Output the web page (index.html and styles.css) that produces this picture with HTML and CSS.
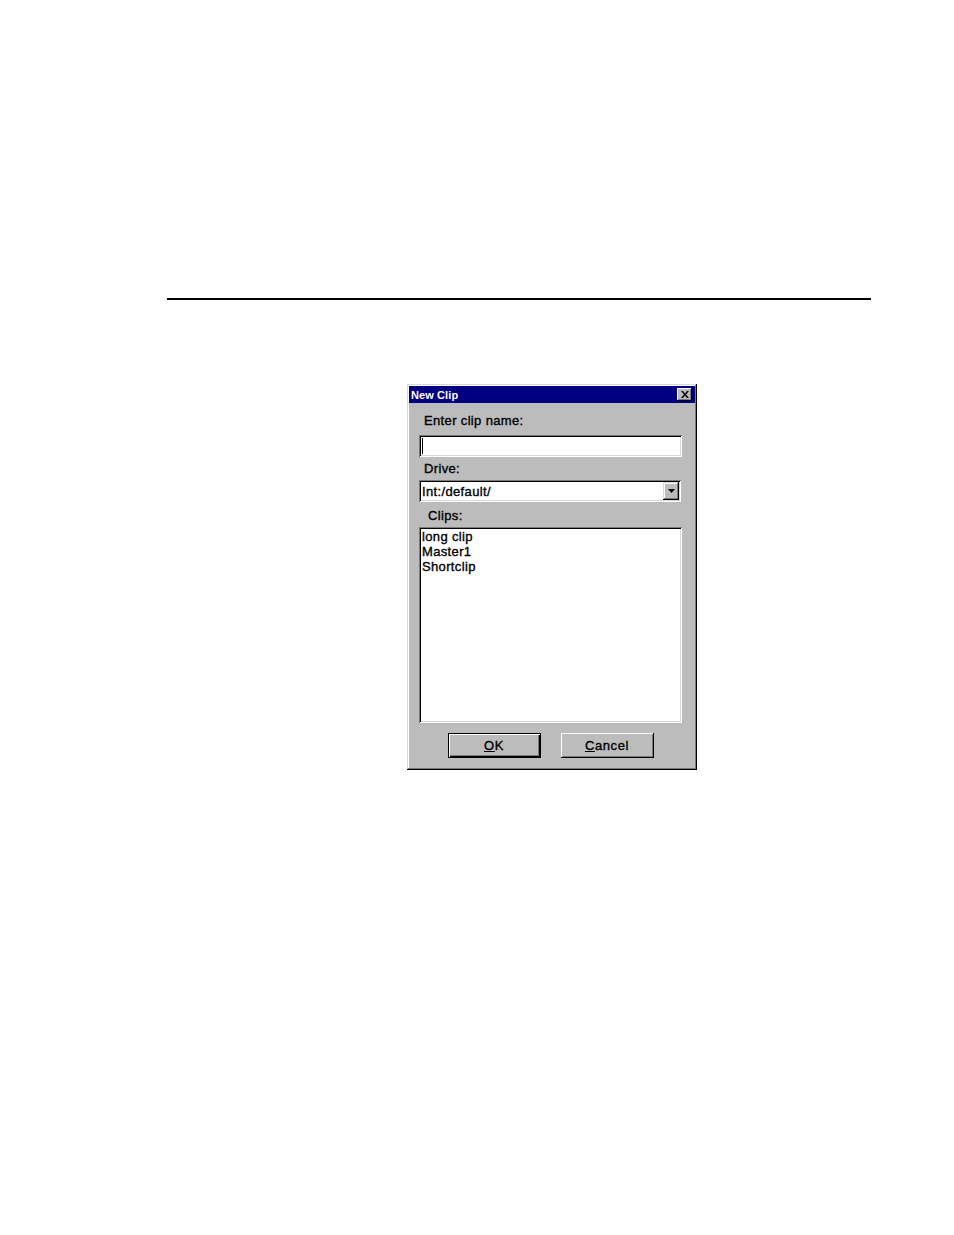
FILE: index.html
```html
<!DOCTYPE html>
<html>
<head>
<meta charset="utf-8">
<link rel="stylesheet" href="styles.css">
</head>
<body>
<div class="page">
  <div class="rule"></div>
  <div class="dialog">
    <div class="titlebar">
      <span class="title">New Clip</span>
      <span class="close">
        <svg width="8" height="7" viewBox="0 0 8 7"><path d="M0 0h2l2 2.5L6 0h2L5 3.5 8 7H6L4 4.5 2 7H0l3-3.5z" fill="#000"/></svg>
      </span>
    </div>
    <div class="body">
      <div class="label">Enter clip name:</div>
      <div class="field textbox"><span class="caret"></span></div>
      <div class="label">Drive:</div>
      <div class="field combo">
        <span class="combo-text">Int:/default/</span>
        <span class="drop">
          <svg width="7" height="4" viewBox="0 0 7 4"><path d="M0 0h7L3.5 4z" fill="#000"/></svg>
        </span>
      </div>
      <div class="label label-clips">Clips:</div>
      <div class="field list">
        <div class="item">long clip</div>
        <div class="item">Master1</div>
        <div class="item">Shortclip</div>
      </div>
      <div class="buttons">
        <div class="btn default"><span class="ul">O</span>K</div>
        <div class="btn"><span class="ul">C</span>ancel</div>
      </div>
    </div>
  </div>
</div>
</body>
</html>
```

FILE: styles.css
```css
html, body {
  margin: 0;
  padding: 0;
  background: #fff;
}

.page {
  width: 954px;
  height: 1235px;
  padding-top: 298px;
  box-sizing: border-box;
  font-family: "Liberation Sans", Arial, sans-serif;
}

.rule {
  margin-left: 167px;
  width: 704px;
  height: 2px;
  background: #000;
}

.dialog {
  margin-top: 84px;
  margin-left: 407px;
  width: 290px;
  height: 386px;
  box-sizing: border-box;
  padding: 2px;
  background: #bcbcbc;
  box-shadow:
    inset -1px -1px 0 #000,
    inset 1px 1px 0 #d8d8d8,
    inset -2px -2px 0 #7a7a7a,
    inset 2px 2px 0 #fff;
}

.titlebar {
  height: 17px;
  background: #000080;
  display: flex;
  align-items: center;
  justify-content: space-between;
  padding: 0 3px 0 2px;
}

.title {
  color: #fff;
  font-weight: bold;
  font-size: 11px;
  letter-spacing: 0.1px;
}

.close {
  width: 15px;
  height: 13px;
  box-sizing: border-box;
  background: #bcbcbc;
  display: flex;
  align-items: center;
  justify-content: center;
  box-shadow:
    inset -1px -1px 0 #000,
    inset 1px 1px 0 #fff,
    inset -2px -2px 0 #7a7a7a;
}

.body {
  padding: 9px 0 0 10px;
}

.txt {
  -webkit-text-stroke: 0.35px #000;
  letter-spacing: 0.35px;
}

.label,
.combo-text,
.item,
.btn {
  -webkit-text-stroke: 0.35px #000;
  letter-spacing: 0.35px;
}

.label {
  height: 15px;
  padding-top: 1px;
  line-height: 16px;
  font-size: 13px;
  color: #000;
  padding-left: 5px;
  margin-top: 3px;
}

.body > .label:first-child {
  margin-top: 0;
}

.label-clips {
  padding-left: 9px;
  margin-top: 5px;
}

.field {
  width: 263px;
  box-sizing: border-box;
  background: #fff;
  box-shadow:
    inset 1px 1px 0 #7a7a7a,
    inset -1px -1px 0 #fff,
    inset 2px 2px 0 #000,
    inset -2px -2px 0 #d8d8d8;
}

.textbox {
  height: 22px;
  margin-top: 7px;
  padding: 3px 0 0 3px;
}

.caret {
  display: block;
  width: 1px;
  height: 16px;
  background: #000;
}

.combo {
  height: 22px;
  margin-top: 4px;
  display: flex;
  align-items: center;
  justify-content: space-between;
  padding: 2px 2px 2px 3px;
  width: 262px;
}

.combo-text {
  font-size: 13px;
  color: #000;
}

.drop {
  width: 16px;
  height: 18px;
  box-sizing: border-box;
  background: #bcbcbc;
  display: flex;
  align-items: center;
  justify-content: center;
  box-shadow:
    inset -1px -1px 0 #000,
    inset 1px 1px 0 #d8d8d8,
    inset -2px -2px 0 #7a7a7a,
    inset 2px 2px 0 #fff;
}

.list {
  height: 196px;
  margin-top: 4px;
  padding: 2px 0 0 3px;
}

.item {
  font-size: 13px;
  line-height: 15px;
  color: #000;
}

.buttons {
  width: 263px;
  margin-top: 10px;
  display: flex;
  justify-content: center;
  gap: 20px;
}

.btn {
  width: 93px;
  height: 25px;
  box-sizing: border-box;
  background: #bcbcbc;
  font-size: 13px;
  display: flex;
  align-items: center;
  justify-content: center;
  color: #000;
  letter-spacing: 0.6px;
  box-shadow:
    inset -1px -1px 0 #000,
    inset 1px 1px 0 #fff,
    inset -2px -2px 0 #7a7a7a;
}

.btn.default {
  box-shadow:
    inset 0 0 0 1px #000,
    inset 1px 1px 0 1px #fff,
    inset -2px -2px 0 0 #000,
    inset -3px -3px 0 0 #7a7a7a;
}

.ul {
  text-decoration: underline;
}
```
